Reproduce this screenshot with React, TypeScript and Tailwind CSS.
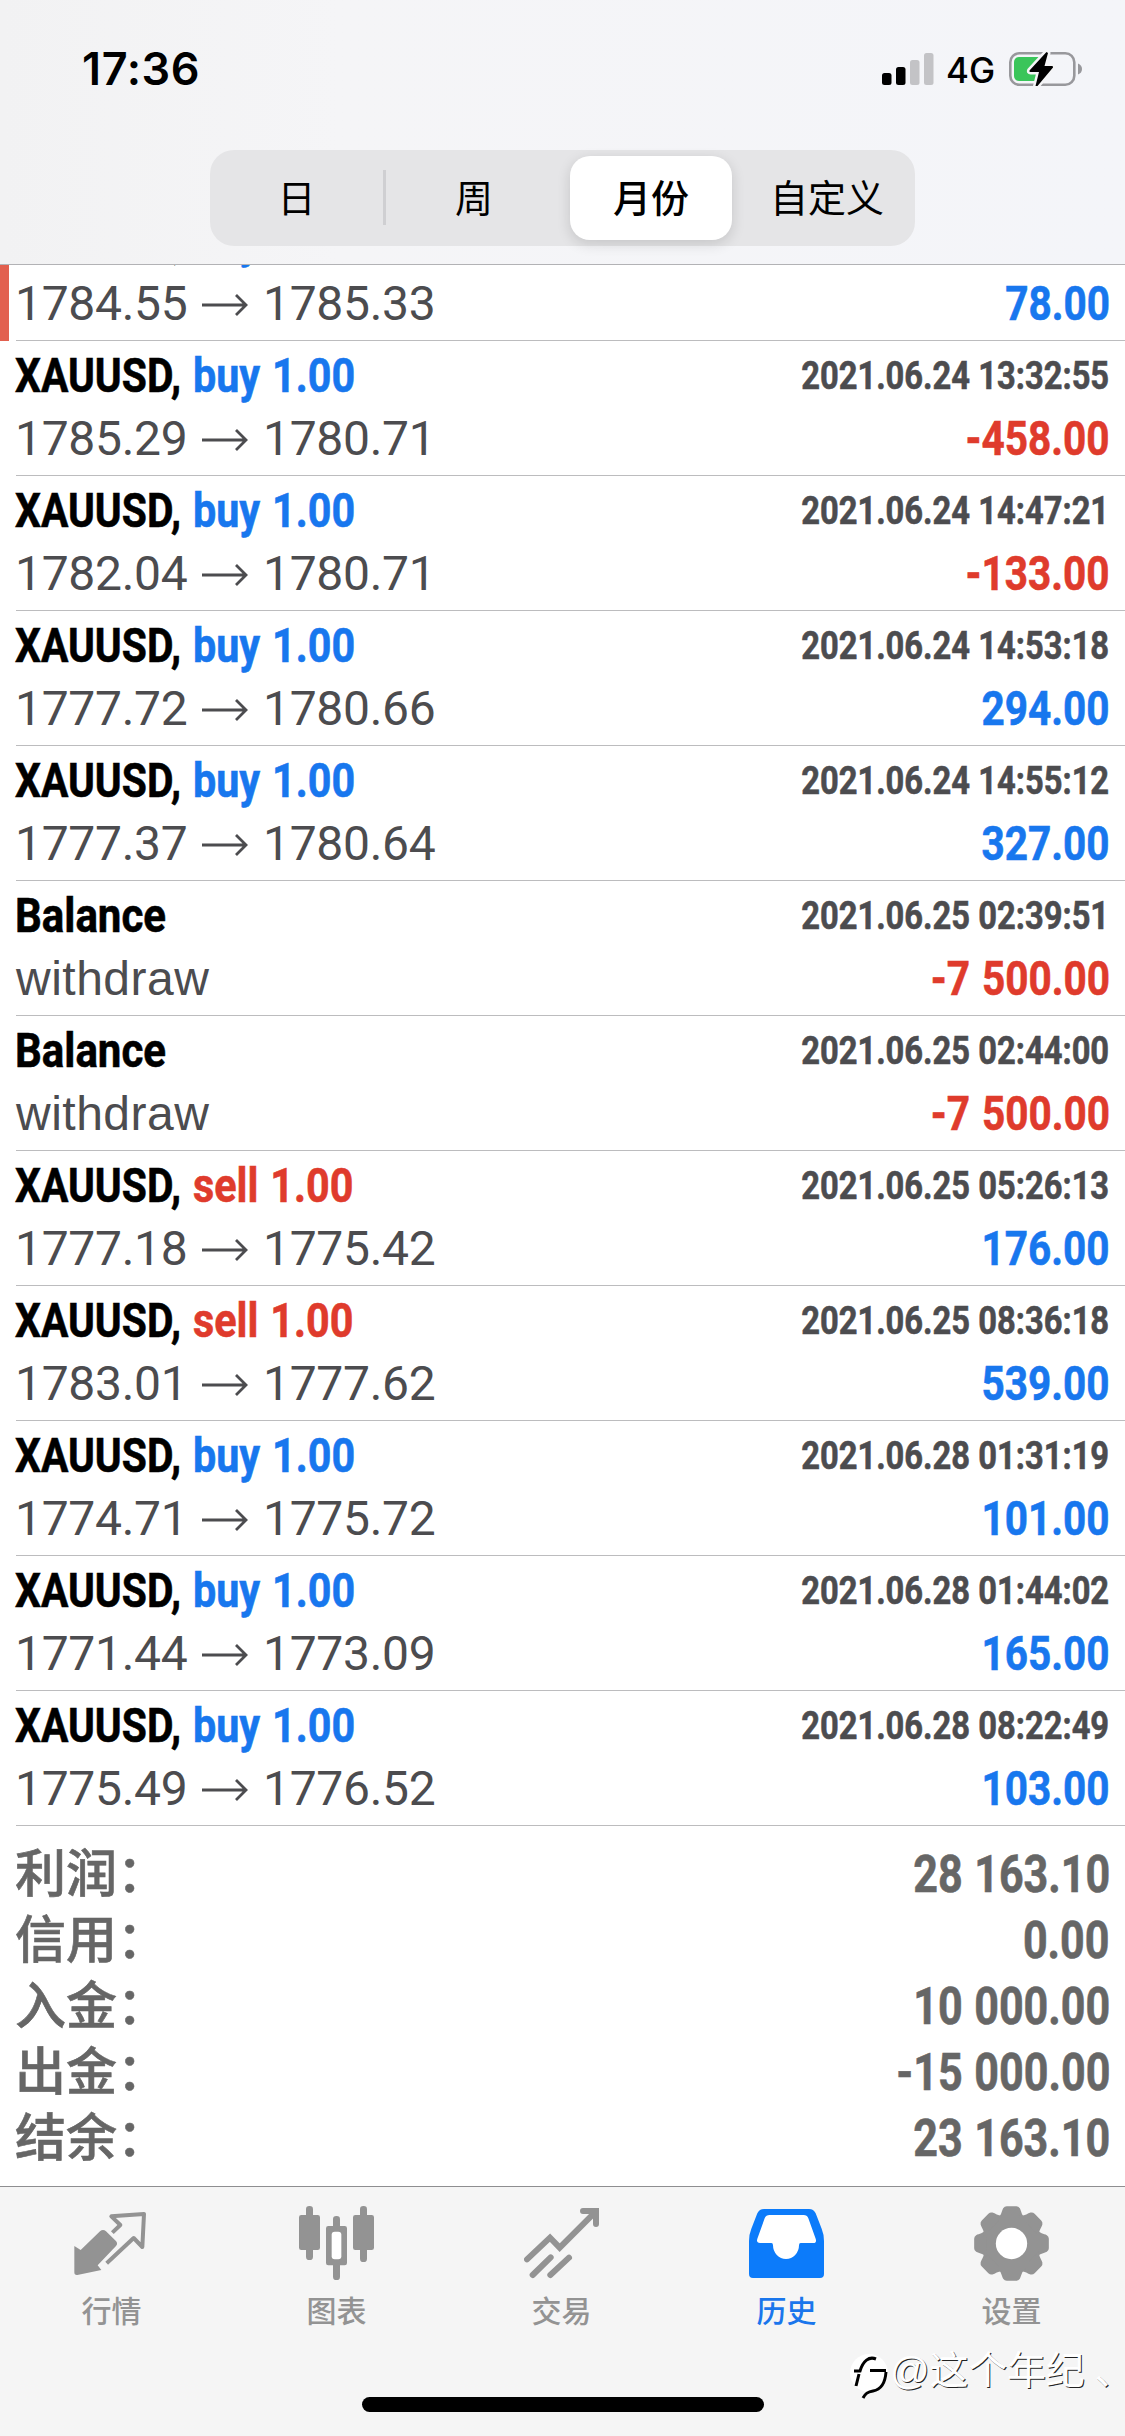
import { ReactNode } from 'react';

interface Deal {
  title: string;
  side?: 'buy' | 'sell';
  time?: string;
  open?: string;
  close?: string;
  note?: string;
  profit: string;
}

const deals: Deal[] = [
  { title: 'XAUUSD,', side: 'buy', time: '2021.06.24 13:32:55', open: '1785.29', close: '1780.71', profit: '-458.00' },
  { title: 'XAUUSD,', side: 'buy', time: '2021.06.24 14:47:21', open: '1782.04', close: '1780.71', profit: '-133.00' },
  { title: 'XAUUSD,', side: 'buy', time: '2021.06.24 14:53:18', open: '1777.72', close: '1780.66', profit: '294.00' },
  { title: 'XAUUSD,', side: 'buy', time: '2021.06.24 14:55:12', open: '1777.37', close: '1780.64', profit: '327.00' },
  { title: 'Balance', time: '2021.06.25 02:39:51', note: 'withdraw', profit: '-7 500.00' },
  { title: 'Balance', time: '2021.06.25 02:44:00', note: 'withdraw', profit: '-7 500.00' },
  { title: 'XAUUSD,', side: 'sell', time: '2021.06.25 05:26:13', open: '1777.18', close: '1775.42', profit: '176.00' },
  { title: 'XAUUSD,', side: 'sell', time: '2021.06.25 08:36:18', open: '1783.01', close: '1777.62', profit: '539.00' },
  { title: 'XAUUSD,', side: 'buy', time: '2021.06.28 01:31:19', open: '1774.71', close: '1775.72', profit: '101.00' },
  { title: 'XAUUSD,', side: 'buy', time: '2021.06.28 01:44:02', open: '1771.44', close: '1773.09', profit: '165.00' },
  { title: 'XAUUSD,', side: 'buy', time: '2021.06.28 08:22:49', open: '1775.49', close: '1776.52', profit: '103.00' },
];

const totals = [
  { label: '利润：', value: '28 163.10' },
  { label: '信用：', value: '0.00' },
  { label: '入金：', value: '10 000.00' },
  { label: '出金：', value: '-15 000.00' },
  { label: '结余：', value: '23 163.10' },
];

const Prices = ({ open, close }: { open?: string; close?: string }) => (
  <div className="flex items-center -ml-[1px] font-['Roboto'] tracking-[-0.3px]">
    <span className="w-[187px]">{open}</span>
    <svg className="w-[46px] h-[24px] mt-[1px]" viewBox="0 0 46 24" fill="none" stroke="#4c4c4f" strokeWidth="2.8">
      <path d="M0 12H44M34 2L44 12L34 22" />
    </svg>
    <span className="ml-[15px]">{close}</span>
  </div>
);

const DealRow = ({ deal }: { deal: Deal }) => (
  <div className="ml-4 pr-4 h-[135px] shrink-0 border-b border-[#bcbcbe] text-[48px] leading-[56px] whitespace-nowrap">
    <div className="flex justify-between pt-[7px] font-['Roboto'] font-bold [-webkit-text-stroke:0.6px]">
      <div className="flex text-black">
        {deal.side ? (
          <>
            <span className="w-[176px] origin-left -ml-[1px] mr-[2px] scale-x-[0.85]">{deal.title}</span>
            <span
              className={
                deal.side === 'buy'
                  ? 'origin-left scale-x-[0.86] [word-spacing:2px] text-[#1877ee]'
                  : 'origin-left scale-x-[0.86] [word-spacing:2px] text-[#df3b2c]'
              }
            >
              {deal.side} 1.00
            </span>
          </>
        ) : (
          <span className="-ml-[1px] origin-left scale-x-[0.875]">{deal.title}</span>
        )}
      </div>
      <span className="origin-right scale-x-[0.86] text-[38px] text-[#4c4c4f]">{deal.time}</span>
    </div>
    <div className="flex justify-between pt-[7px] text-[#4c4c4f]">
      {deal.note ? <span className="tracking-[0.5px]">{deal.note}</span> : <Prices open={deal.open} close={deal.close} />}
      <span
        className={
          deal.profit.startsWith('-')
            ? "-mr-[1px] origin-right scale-x-[0.845] font-['Roboto'] font-bold [word-spacing:2px] [-webkit-text-stroke:0.6px] text-[#df3b2c]"
            : "-mr-[1px] origin-right scale-x-[0.845] font-['Roboto'] font-bold [-webkit-text-stroke:0.6px] text-[#1877ee]"
        }
      >
        {deal.profit}
      </span>
    </div>
  </div>
);

const StatusBar = () => (
  <div className="flex justify-between items-start h-[150px] pt-[45px] pl-[82px] pr-[42px]">
    <span className="font-['Inter'] font-semibold text-[45px] leading-[48px] tracking-[0.6px]">17:36</span>
    <div className="flex items-start">
      <svg className="w-[52px] h-[34px] mt-[7px]" viewBox="0 0 52 34">
        <rect x="0" y="21" width="9.5" height="12" rx="2.5" fill="#000" />
        <rect x="14" y="15" width="9.5" height="18" rx="2.5" fill="#000" />
        <rect x="28" y="8" width="9.5" height="25" rx="2.5" fill="#c3c3c6" />
        <rect x="42" y="1" width="9.5" height="32" rx="2.5" fill="#c3c3c6" />
      </svg>
      <span className="ml-[12px] w-[62px] mt-[1px] font-['Inter'] font-medium text-[35px] leading-[48px]">4G</span>
      <svg className="w-[75px] h-[38px] mt-[5px]" viewBox="0 0 75 38">
        <rect x="2.3" y="3.3" width="64" height="31.5" rx="9" fill="none" stroke="#98989c" strokeWidth="2.6" />
        <rect x="6" y="7" width="30" height="24" rx="5" fill="#3ac55a" />
        <path d="M70 13.5Q74 15 74 19T70 24.5Z" fill="#98989c" />
        <path
          d="M38.5 2L21.5 20.5Q21 22 22.5 22H31L27.5 36H29.5L45 17.500Q45.500 16 44 16H36.500L40 3Z"
          fill="#000"
          stroke="#f5f5f7"
          strokeWidth="5"
          strokeLinejoin="round"
          paintOrder="stroke"
        />
      </svg>
    </div>
  </div>
);

const PeriodTabs = () => (
  <div className="mx-auto flex w-[705px] h-24 rounded-[24px] bg-[#e5e5e7] text-[38px] leading-[98px] text-center text-black">
    <div className="w-[173px]">日</div>
    <div className="mt-[20px] h-[55px] w-[3px] bg-[#cfcfd2]" />
    <div className="w-[176px]">周</div>
    <div className="mt-[6px] ml-[8px] h-[84px] w-[162px] rounded-[20px] bg-white leading-[86px] font-medium shadow-[0_4px_14px_rgba(0,0,0,0.14)]">
      月份
    </div>
    <div className="w-[183px] pl-[7px]">自定义</div>
  </div>
);

const QuotesIcon = () => (
  <svg className="size-[75px]" viewBox="0 0 225 225">
    <path d="M1 120L20 132L78 76Q87 68 96 76L125 104Q133 112 126 120L71 178L82 192L10 207Q1 208 1 199Z" fill="#939393" />
    <path d="M115 80L139 57L112 31L210 24L205 123L179 96L98 172" fill="none" stroke="#939393" strokeWidth="12" strokeLinejoin="round" />
  </svg>
);

const ChartIcon = () => (
  <svg className="size-[75px]" viewBox="0 0 225 225" fill="#939393">
    <rect x="0" y="27" width="63" height="105" rx="7" />
    <rect x="21" y="0" width="21" height="162" rx="10" />
    <rect x="102" y="30" width="21" height="192" rx="10" />
    <rect x="81" y="60" width="63" height="118" rx="7" />
    <rect x="98" y="77" width="29" height="83" rx="9" fill="#fff" />
    <rect x="162" y="27" width="63" height="105" rx="7" />
    <rect x="183" y="0" width="21" height="168" rx="10" />
  </svg>
);

const TradeIcon = () => (
  <svg className="size-[75px]" viewBox="0 0 225 225" fill="none" stroke="#939393" strokeWidth="18" strokeLinecap="round">
    <path d="M9 160L78 95L107 125L212 20" />
    <path d="M177 15H216V54" />
    <path d="M26 207L80 154M79 207L135 155" />
  </svg>
);

const HistoryIcon = () => (
  <svg className="size-[75px]" viewBox="0 0 225 225">
    <path
      d="M45 9H180Q194 9 200 22L218 68Q225 85 225 105V204Q225 216 213 216H12Q0 216 0 204V105Q0 85 7 68L25 22Q31 9 45 9Z"
      fill="#0c7bfa"
    />
    <path
      d="M62 27H164Q174 27 178 37L200 98Q204 111 193 111H155Q150 111 150 118A39 41 0 0 1 72 118Q72 111 67 111H33Q21 111 25 98L47 37Q51 27 62 27Z"
      fill="#fff"
    />
  </svg>
);

const SettingsIcon = () => (
  <svg className="size-[75px]" viewBox="-112.5 -112.5 225 225" fill="#939393">
    <circle r="87" />
    {[0, 45, 90, 135, 180, 225, 270, 315].map((angle) => (
      <path
        key={angle}
        d="M-42 -76C-30 -84 -30 -97 -25 -106Q-21 -112 -14 -112H14Q21 -112 25 -106C30 -97 30 -84 42 -76Z"
        transform={`rotate(${angle})`}
      />
    ))}
    <circle r="47" fill="#fff" />
  </svg>
);

const TabItem = ({ label, active, children }: { label: string; active?: boolean; children: ReactNode }) => (
  <div className="flex w-[225px] flex-col items-center">
    {children}
    <span className={active ? 'mt-[9px] text-[30px] leading-[44px] font-medium text-[#1a76ec]' : 'mt-[9px] text-[30px] leading-[44px] font-medium text-[#939393]'}>
      {label}
    </span>
  </div>
);

const App = () => {
  return (
    <div className="relative flex h-[2436px] w-[1125px] flex-col overflow-hidden bg-white font-['Liberation_Sans','Noto_Sans_CJK_SC',sans-serif]">
      {/* Header */}
      <header className="h-[265px] shrink-0 border-b border-[#b2b2b5] bg-linear-to-r from-[#f2f2f3] via-[#f5f5f7] via-30% to-[#f4f5f9]">
        <StatusBar />
        <PeriodTabs />
      </header>

      {/* Deal scrolled partly under the header */}
      <div className="flex h-[76px] shrink-0 overflow-hidden">
        <div className="w-[9px] bg-[#e2604f]" />
        <div className="-ml-[9px] flex flex-1 flex-col justify-end">
          <DealRow deal={{ title: 'XAUUSD,', side: 'buy', open: '1784.55', close: '1785.33', profit: '78.00' }} />
        </div>
      </div>

      {deals.map((deal) => (
        <DealRow key={deal.time} deal={deal} />
      ))}

      {/* Totals */}
      <div className="flex-1 px-4 pt-[16px] text-[51px] leading-[66px] text-[#666]">
        {totals.map((row) => (
          <div key={row.label} className="flex h-[66px] justify-between">
            <span className="-ml-[1px] font-medium [-webkit-text-stroke:0.6px]">{row.label}</span>
            <span className="-mr-[1px] origin-right scale-x-[0.845] font-['Roboto'] font-bold [word-spacing:1px] [-webkit-text-stroke:0.6px]">
              {row.value}
            </span>
          </div>
        ))}
      </div>

      {/* Tab bar */}
      <nav className="h-[250px] shrink-0 border-t-[1px] border-[#8e8e90] bg-[#f5f5f5] pt-[19px]">
        <div className="-ml-[1px] flex">
          <TabItem label="行情"><QuotesIcon /></TabItem>
          <TabItem label="图表"><ChartIcon /></TabItem>
          <TabItem label="交易"><TradeIcon /></TabItem>
          <TabItem label="历史" active><HistoryIcon /></TabItem>
          <TabItem label="设置"><SettingsIcon /></TabItem>
        </div>
        <div className="mx-auto mt-[63px] h-[15px] w-[402px] rounded-full bg-black" />
      </nav>

      {/* Author mark */}
      <div className="absolute right-0 bottom-[36px] flex h-[48px] w-[276px] items-start">
        <svg className="h-[48px] w-[40px] shrink-0" viewBox="0 0 40 48" fill="none" stroke="#000" strokeWidth="3">
          <circle cx="20" cy="21" r="19" fill="#fff" stroke="none" />
          <path d="M5 19H11C14 9 20 4 27 7M21 18.500H37M10 22L7 34M37 20C36 34 30 38 24 39C18 40 16 42 14 46" />
        </svg>
        <span className="ml-[1px] -mt-[5px] text-[39px] leading-[48px] tracking-[-0.2px] whitespace-nowrap text-white [text-shadow:1px_1px_0_#222]">
          @这个年纪<span className="ml-[10px]">、</span>
        </span>
      </div>
    </div>
  );
};

export default App;
